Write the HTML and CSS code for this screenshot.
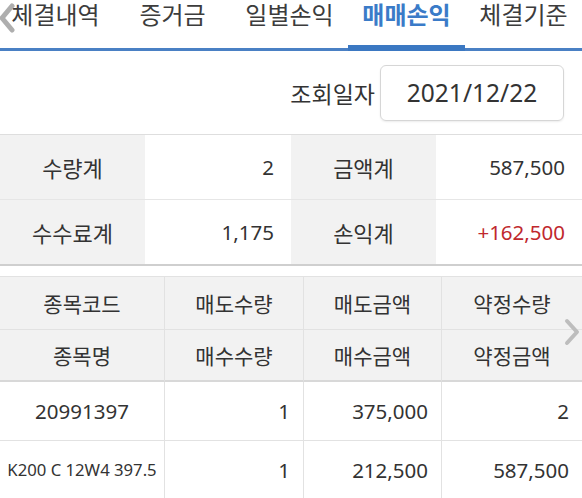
FILE: index.html
```html
<!DOCTYPE html>
<html lang="ko">
<head>
<meta charset="utf-8">
<link rel="stylesheet" href="styles.css">
</head>
<body>
<div class="page">
  <nav class="tabs">
    <div class="tab">체결내역</div>
    <div class="tab">증거금</div>
    <div class="tab">일별손익</div>
    <div class="tab active">매매손익</div>
    <div class="tab">체결기준</div>
  </nav>
  <svg class="chev chev-left" width="16" height="30" viewBox="0 0 16 30"><path d="M13 3 L3 15 L13 27" fill="none" stroke="#9a9a9a" stroke-width="5" stroke-linecap="round" stroke-linejoin="round" opacity="0.8"/></svg>

  <div class="query">
    <span class="query-label">조회일자</span>
    <div class="datebox">2021/12/22</div>
  </div>

  <div class="summary">
    <div class="s-label">수량계</div>
    <div class="s-val">2</div>
    <div class="s-label">금액계</div>
    <div class="s-val">587,500</div>
    <div class="s-label">수수료계</div>
    <div class="s-val">1,175</div>
    <div class="s-label">손익계</div>
    <div class="s-val red">+162,500</div>
  </div>

  <div class="grid-wrap">
    <div class="grid">
      <div class="h">종목코드</div>
      <div class="h">매도수량</div>
      <div class="h">매도금액</div>
      <div class="h">약정수량</div>
      <div class="h h2">종목명</div>
      <div class="h h2">매수수량</div>
      <div class="h h2">매수금액</div>
      <div class="h h2">약정금액</div>
      <div class="d c">20991397</div>
      <div class="d">1</div>
      <div class="d">375,000</div>
      <div class="d">2</div>
      <div class="d c small">K200 C 12W4 397.5</div>
      <div class="d">1</div>
      <div class="d">212,500</div>
      <div class="d">587,500</div>
    </div>
    <svg class="chev chev-right" width="16" height="28" viewBox="0 0 16 28"><path d="M3 3 L13 14 L3 25" fill="none" stroke="#bdbdbd" stroke-width="4" stroke-linecap="round" stroke-linejoin="round"/></svg>
  </div>
</div>
</body>
</html>
```
FILE: styles.css
```css
* { box-sizing: border-box; }
html, body { margin: 0; padding: 0; background: #fff; }
body {
  font-family: "Noto Sans", "Noto Sans CJK KR", sans-serif;
  color: #333;
  width: 582px;
  height: 498px;
  overflow: hidden;
}
.page { position: relative; width: 582px; }

.tabs {
  display: flex;
  height: 51px;
  margin-left: -3px;
  width: 585px;
  border-bottom: 3px solid #4a80c4;
}
.tab {
  flex: 1;
  text-align: center;
  font-size: 24px;
  line-height: 30px;
  color: #3c3c3c;
  position: relative;
}
.tab.active {
  color: #3a7bc8;
  font-weight: bold;
}
.tab.active::after {
  content: "";
  position: absolute;
  left: 0; right: 0; bottom: -3px;
  height: 6px;
  background: #3b78c2;
}
.chev { position: absolute; }
.chev-left { left: -1px; top: 3px; }

.query {
  display: flex;
  justify-content: flex-end;
  align-items: center;
  gap: 5px;
  height: 84px;
  padding-right: 18px;
  border-bottom: 1px solid #dedede;
}
.query-label { font-size: 23px; color: #333; }
.datebox {
  width: 184px;
  height: 56px;
  border: 1px solid #d6d6d6;
  border-radius: 6px;
  box-shadow: 0 1px 2px rgba(0,0,0,0.08);
  display: flex;
  align-items: center;
  justify-content: center;
  font-size: 24.5px;
  color: #333;
}

.summary {
  display: grid;
  grid-template-columns: 145px 146px 145px 146px;
  grid-template-rows: 65px 64px;
  border-bottom: 2px solid #cfcfcf;
}
.summary > div {
  display: flex;
  align-items: center;
  font-size: 20.5px;
  border-bottom: 1px solid #e6e6e6;
}
.summary > div:nth-last-child(-n+4) { border-bottom: none; }
.s-label { background: #f2f2f2; justify-content: center; font-size: 22px !important; }
.s-val { justify-content: flex-end; padding-right: 17px; }
.red { color: #c0282d; }

.grid-wrap { position: relative; margin-top: 10px; }
.grid {
  display: grid;
  grid-template-columns: 165px 139px 138px 140px;
  grid-template-rows: 53px 52px 59px 58px;
  border-top: 1px solid #e2e2e2;
}
.grid > div {
  display: flex;
  align-items: center;
  border-right: 1px solid #e2e2e2;
  border-bottom: 1px solid #e2e2e2;
  font-size: 21px;
}
.grid > div:nth-child(4n) { border-right: none; }
.h { background: #f2f2f2; justify-content: center; }
.h2 { border-bottom: 2px solid #d8d8d8 !important; }
.d { justify-content: flex-end; padding-right: 13px; font-size: 20.5px !important; }
.d.c { justify-content: center; padding-right: 0; }
.d.small { font-size: 16.7px !important; }
.chev-right { right: 2px; top: 42px; }
```
